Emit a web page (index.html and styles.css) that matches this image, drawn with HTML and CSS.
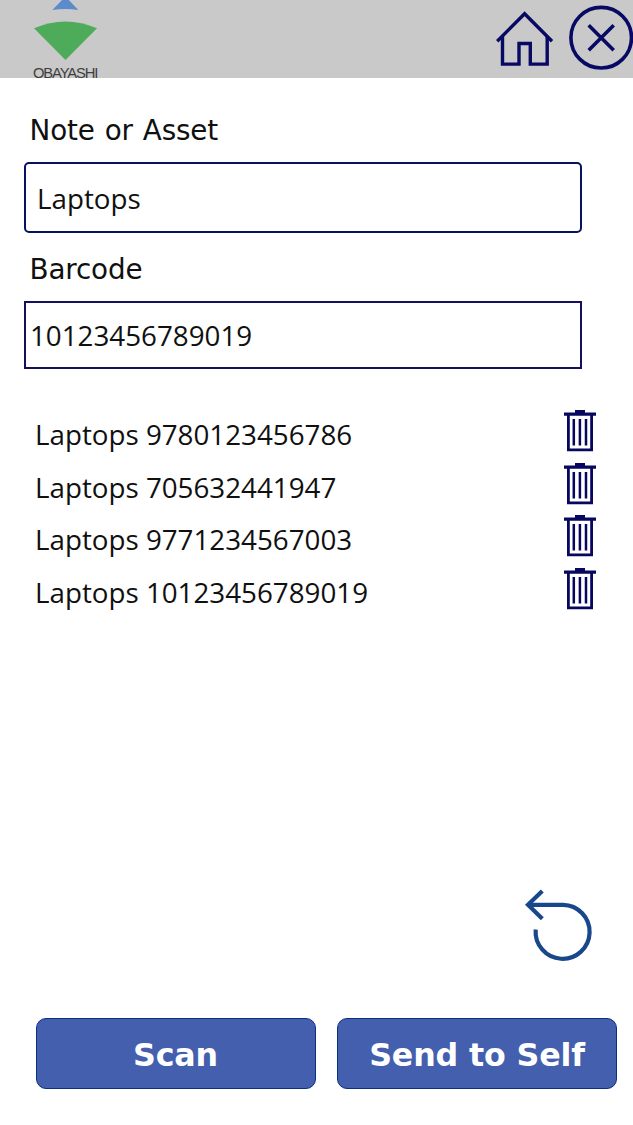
FILE: index.html
```html
<!DOCTYPE html>
<html lang="en">
<head>
<meta charset="utf-8">
<title>Asset scanner</title>
<link rel="stylesheet" href="styles.css">
</head>
<body>
<svg class="defs" aria-hidden="true">
  <symbol id="trash" viewBox="0 0 34 44">
    <path d="M12 1h10v3H12zM1 3.500h32v3.2H1z" fill="#07075f"/>
    <path d="M5.4 6v34.9h23.2V6" fill="none" stroke="#07075f" stroke-width="2.8"/>
    <path d="M10.800 10v26.5M16.900 10v26.5M23 10v26.5" stroke="#07075f" stroke-width="2.5"/>
  </symbol>
</svg>
<div class="app">
  <header class="topbar">
    <div class="logo">
      <svg class="logo-mark" width="64" height="62" viewBox="33 0 64 62">
        <path d="M65.5-3.5 78.3 10Q65.5 8 52.3 10Z" fill="#5b8bcb"/>
        <path d="M34 28.2Q65.5 14.600 97 28.200L65.500 60Z" fill="#4dab59"/>
      </svg>
      <span class="logo-name">OBAYASHI</span>
    </div>
    <nav class="actions">
      <svg width="58" height="78" viewBox="496 0 58 78" fill="none" stroke="#070963" stroke-width="3.4">
        <path d="M497.200 41.200 524.600 13.700 552 41.200"/>
        <path d="M502.500 36.500V64.100H519V43.500H530.300V64.100H547.200V36.500"/>
      </svg>
      <svg width="65" height="78" viewBox="568 0 65 78" fill="none" stroke="#070963" stroke-width="3.600">
        <circle cx="601.200" cy="37.700" r="30.300"/>
        <path d="M588.700 25.300 613.700 50.300M613.700 25.300 588.700 50.300"/>
      </svg>
    </nav>
  </header>
  <main class="content">
    <div class="label">Note or Asset</div>
    <div class="field field-note">Laptops</div>
    <div class="label label-barcode">Barcode</div>
    <div class="field field-barcode">10123456789019</div>
    <ul class="list">
      <li class="item"><span>Laptops 9780123456786</span><svg class="trash"><use href="#trash"/></svg></li>
      <li class="item"><span>Laptops 705632441947</span><svg class="trash"><use href="#trash"/></svg></li>
      <li class="item"><span>Laptops 9771234567003</span><svg class="trash"><use href="#trash"/></svg></li>
      <li class="item"><span>Laptops 10123456789019</span><svg class="trash"><use href="#trash"/></svg></li>
    </ul>
  </main>
  <footer class="footer">
    <svg class="undo" width="70" height="74" viewBox="524 888 70 74" fill="none" stroke="#19478b" stroke-width="4.200">
      <path d="M528 904.800H563A27 27 0 1 1 535.700 929.500"/>
      <path d="M542.300 891 528 904.800 542.300 918.700"/>
    </svg>
    <div class="buttons">
      <div class="button">Scan</div>
      <div class="button">Send to Self</div>
    </div>
  </footer>
</div>
</body>
</html>
```
FILE: styles.css
```css
body {
  margin: 0;
  background: #fff;
  color: #101010;
  font-family: "Open Sans", sans-serif;
  font-size: 27.75px;
}
.defs { display: none; }
.app {
  display: flex;
  flex-direction: column;
  width: 633px;
  height: 1125px;
  overflow: hidden;
}
.topbar {
  display: flex;
  justify-content: space-between;
  flex: none;
  height: 78.4px;
  overflow: hidden;
  background: #c9c9c9;
}
.logo {
  display: flex;
  flex-direction: column;
  padding-left: 33px;
}
.logo-mark { display: block; flex: none; }
.logo-name {
  flex: none;
  width: 64px;
  margin-top: 2.500px;
  font: 14.8px/17px "Liberation Sans", sans-serif;
  letter-spacing: -1.150px;
  white-space: nowrap;
  color: #3f3f3f;
}
.actions { display: flex; gap: 14px; }
.content { flex: 1; padding: 32.600px 0 0 24px; }
.label {
  padding-left: 5.500px;
  font-family: "DejaVu Sans", sans-serif;
  font-size: 27.8px;
  line-height: 40px;
  letter-spacing: -0.150px;
  word-spacing: 1.300px;
}
.label-barcode { margin-top: 16.500px; }
.field {
  display: flex;
  align-items: center;
  box-sizing: border-box;
  width: 558px;
  border: 2px solid #11115c;
}
.field-note {
  height: 71.500px;
  margin-top: 11px;
  padding-left: 11px;
  border-color: #07125f;
  border-radius: 5px;
}
.field-barcode {
  height: 67.500px;
  margin-top: 11.500px;
  padding-left: 4px;
}
.list {
  margin: 38.600px 0 0;
  padding: 0 36px 0 11px;
  list-style: none;
}
.item {
  display: flex;
  align-items: center;
  justify-content: space-between;
  height: 52.700px;
}
.trash { width: 34px; height: 44px; margin-bottom: 6px; }
.footer {
  display: flex;
  flex-direction: column;
  gap: 55.500px;
  padding: 0 16px 36px 35.500px;
}
.undo { align-self: flex-end; margin-right: 23px; }
.buttons { display: grid; grid-template-columns: 1fr 1fr; gap: 21.500px; }
.button {
  box-sizing: border-box;
  height: 71.500px;
  border: 1.500px solid #0b2f80;
  border-radius: 10px;
  background: #435fae;
  color: #fff;
  font: bold 31.7px/72px "DejaVu Sans", sans-serif;
  letter-spacing: -0.150px;
  text-align: center;
}
```
